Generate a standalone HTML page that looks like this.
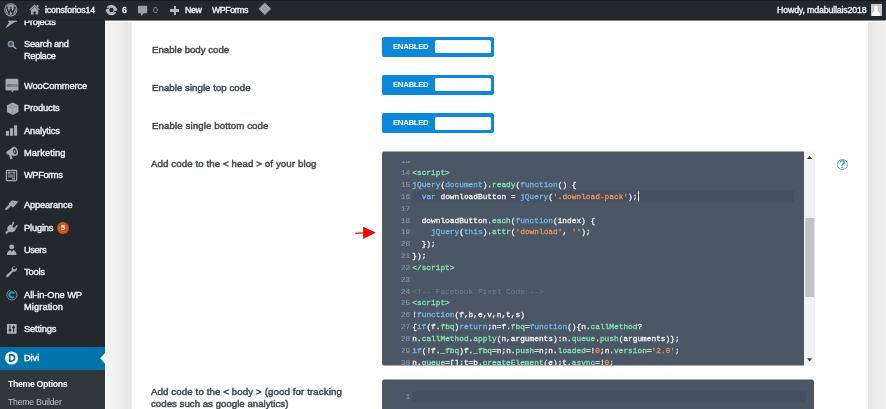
<!DOCTYPE html>
<html><head><meta charset="utf-8">
<style>
*{margin:0;padding:0;box-sizing:border-box}
html,body{width:886px;height:409px;overflow:hidden;background:#fff;font-family:"Liberation Sans",sans-serif;}
#root{position:relative;width:886px;height:409px;overflow:hidden;background:#fff}
.abs{position:absolute}
.x{position:absolute;will-change:transform;line-height:12px;white-space:pre;font-family:"Liberation Sans",sans-serif}
#bar{left:0;top:0;width:886px;height:20px;background:linear-gradient(to bottom,#171b1f 0,#171b1f 0.8px,#23282d 1.4px,#23282d 18.5px,#1f2327 20px);z-index:5;box-shadow:0 0.5px 0.7px rgba(30,34,38,.55)}
#side{left:0;top:0;width:105px;height:409px;background:#23282d}
#sub{left:0;top:369.5px;width:105px;height:40px;background:#32373c}
#divi{left:0;top:347px;width:105px;height:22.5px;background:#0073aa}
#g1{left:105px;top:22px;width:27px;height:387px;background:linear-gradient(to right,#fbfbfb 0,#f3f3f3 1.5px,#f1f1f1 8px,#ececec 18px,#e5e5e5 26.3px,#fff 26.9px)}
#g2{left:867px;top:21.5px;width:19px;height:388px;background:linear-gradient(to right,#fff 0.6px,#e5e5e5 1.2px,#ebebeb 7px,#f0f0f0 19px)}
.tog{position:absolute;left:382px;width:112px;height:20px;background:#0c88d8;border-radius:2px}
.tog i{position:absolute;left:52.8px;top:3.5px;width:56.3px;height:13px;background:#fff;border-radius:1.5px}
#ed1{left:381.8px;top:151px;width:422px;height:214px;transform:translateY(0.5px);background:#4c5766;overflow:hidden;border-radius:2px 0 0 2px}
#scr{left:0;top:8.5px;width:422px;height:205.5px;overflow:hidden}
#act{left:30.2px;top:30.60px;width:382.5px;height:11.6px;background:#455060}
#cur{left:256.2px;top:31.10px;width:0.8px;height:10.5px;background:#fff}
#sb{left:803.8px;top:151px;transform:translateY(0.5px);width:11px;height:214px;background:#f1f1f1}
#th{left:805px;top:218px;width:9px;height:79px;transform:translateX(0.3px);background:#c1c1c1}
#ed2{left:381.8px;top:379px;transform:translateY(0.4px);width:432.5px;height:31px;background:#4c5766;border-radius:2px 2px 0 0}
.ln{position:absolute;will-change:transform;left:0;width:422px;height:12px;font-family:"Liberation Mono",monospace;font-size:7.82px;line-height:12px;white-space:pre;color:#f1f3f5;font-weight:normal;-webkit-text-stroke:0.28px}
.ln .n{position:absolute;left:0;width:28.2px;text-align:right;color:#8893a4;font-weight:normal;-webkit-text-stroke:0.18px}
.ln .c{position:absolute;left:30.3px}
.k{color:#70b8ea}.g{color:#84e0b4}.o{color:#f2935a}.cm{color:#76818f;-webkit-text-stroke:0}.w{color:#f1f3f5}
</style></head><body><div id="root">
<div id="side" class="abs"></div>
<div id="sub" class="abs"></div>
<div id="divi" class="abs"></div>
<svg class="abs" style="left:0;top:20px" width="24" height="10" viewBox="0 0 24 10"><path fill="#a6aaae" d="M8.300 .2h8.500v1.700h-2L6 7.900l-.3-.4L9.300 1.900H8.300z"/></svg>
<svg class="abs" style="left:7.2px;top:39.5px;" width="9.8" height="9.8" viewBox="0 0 20 20"><g fill="none" stroke-width="3"><circle cx="8" cy="8" r="5.2" stroke="#7b95ab" fill="#37526b"/><path d="M12.4 12.2l5.4 5.2" stroke-linecap="round" stroke="#9ea3a8"/></g></svg>
<svg class="abs" style="left:5px;top:78px" width="14" height="15" viewBox="0 0 14 15"><rect x=".5" y=".8" width="12.900" height="11.800" rx="1.300" fill="#a6aaae"/><path d="M6 12.400h2.800l-1.600 2z" fill="#a6aaae"/><text x="7" y="8.700" font-family="Liberation Sans" font-weight="bold" font-size="5.600" text-anchor="middle" fill="#565c62">woo</text></svg>
<svg class="abs" style="left:5.5px;top:101.5px;" width="13.4" height="13.4" viewBox="0 0 20 20"><path fill="#a6aaae" d="M10 .8l8.600 4.200v9.800L10 19.400 1.400 14.800V5z"/><g stroke="#7a8086" stroke-width=".9" fill="none"><path d="M1.800 5.200L10 9.400l8.200-4.200"/><path d="M10 9.400v9.600"/><path d="M5.600 3l8.400 4.200"/></g></svg>
<svg class="abs" style="left:5.4px;top:124.05px;" width="13.1" height="13.1" viewBox="0 0 20 20"><g fill="#a6aaae"><rect x="1.4" y="10.500" width="4.800" height="7.500"/><rect x="7.600" y="6.500" width="4.800" height="11.500"/><rect x="13.800" y="2" width="4.800" height="16"/></g></svg>
<svg class="abs" style="left:5px;top:146px" width="14" height="14" viewBox="0 0 14 14"><g fill="#a6aaae"><path d="M1 6l6.200-4 2.600 8-7.600-1.600z"/><ellipse cx="9.600" cy="5.400" rx="3.200" ry="4.700" transform="rotate(-18 9.600 5.400)"/><path d="M4 8.600l2.700.6.900 3.800-2.300.3z"/></g><ellipse cx="9.800" cy="5.400" rx="1.700" ry="2.900" transform="rotate(-18 9.800 5.400)" fill="#2b3036"/><ellipse cx="9.500" cy="5.500" rx=".8" ry="1.400" transform="rotate(-18 9.500 5.500)" fill="#a6aaae"/></svg>
<svg class="abs" style="left:5.4px;top:168.65px;" width="13.1" height="13.1" viewBox="0 0 20 20"><rect x="2.2" y="2.2" width="15.6" height="15.6" rx="1.2" fill="none" stroke="#a6aaae" stroke-width="1.8"/><g fill="#a6aaae"><rect x="4.3" y="4.2" width="4" height="2.6"/><rect x="11.6" y="4.2" width="4" height="2.6"/><rect x="8.6" y="4.2" width="2.6" height="1.6"/><rect x="4.6" y="8.4" width="10.8" height="1.5"/><rect x="4.6" y="11.3" width="10.8" height="1.5"/><rect x="10.6" y="14" width="4.8" height="1.8"/></g></svg>
<svg class="abs" style="left:4px;top:198px" width="16" height="14" viewBox="4 198 16 14"><path d="M8.600 203.500L12.200 200.200 18.300 201.500 15.800 204.800 13.100 207.500 10.400 205.800z" fill="#a6aaae"/><path d="M6.300 208.900L10.600 204.600" stroke="#a6aaae" stroke-width="2.300" stroke-linecap="round"/><path d="M12.600 202.200l2.800 2.600" stroke="#6a7076" stroke-width=".6"/></svg>
<svg class="abs" style="left:4px;top:220px" width="16" height="15" viewBox="4 220 16 15"><path d="M10.200 224.400L15.800 229.800C14.200 232.600 10.200 233 8.200 231.200C6.200 229.200 7.400 226 10.200 224.400Z" fill="#a6aaae"/><g stroke="#a6aaae" stroke-linecap="round" fill="none"><path d="M8.200 231.200L6.500 232.800" stroke-width="2"/><path d="M12 225.800L13.400 222.600" stroke-width="1.600"/><path d="M14.800 228.400L17 225.900" stroke-width="1.600"/></g></svg>
<svg class="abs" style="left:5.2px;top:243.0px;" width="13.4" height="13.4" viewBox="0 0 20 20"><g fill="#a6aaae"><circle cx="10" cy="5.800" r="3.700"/><path d="M2.800 17.800c0-4.200 2.600-6.600 5-7.200l2.200 2.600 2.200-2.600c2.400.6 5 3 5 7.200z"/></g></svg>
<svg class="abs" style="left:5.4px;top:265.45px;" width="13.1" height="13.1" viewBox="0 0 20 20"><path fill="#a6aaae" d="M16.700 2.300a4.800 4.800 0 0 0-6.500 5.900l-8 7.300a1.900 1.900 0 1 0 2.700 2.700l7.300-8a4.800 4.800 0 0 0 5.900-6.500l-3 3-2.500-.6-.6-2.500z"/></svg>
<svg class="abs" style="left:6.1px;top:289.1px;" width="11.8" height="11.8" viewBox="0 0 20 20"><circle cx="10" cy="10" r="8.600" fill="none" stroke="#8a9096" stroke-width="1.500" stroke-dasharray="46 8" transform="rotate(-62 10 10)"/><circle cx="10" cy="10" r="4.300" fill="none" stroke="#1c97dc" stroke-width="3.200" stroke-dasharray="21 6" transform="rotate(40 10 10)"/></svg>
<svg class="abs" style="left:5.9px;top:322.6px;" width="11.6" height="11.6" viewBox="0 0 20 20"><rect x="1.600" y="1.600" width="16.800" height="16.800" rx="1" fill="#adb1b5"/><g fill="#23282d"><rect x="6" y="4.200" width="1.700" height="11.600"/><rect x="12.300" y="4.200" width="1.700" height="11.600"/><rect x="4.600" y="10.800" width="4.500" height="2.800"/><rect x="10.900" y="6.200" width="4.500" height="2.800"/></g></svg>
<svg class="abs" style="left:4px;top:350px" width="16" height="16" viewBox="0 0 16 16"><circle cx="7.600" cy="8" r="6.550" fill="#fff"/><path d="M5.700 4.900V11.100H7.500A3.100 3.100 0 0 0 7.500 4.900Z" fill="none" stroke="#0073aa" stroke-width="1.700"/></svg>
<svg class="abs" style="left:99px;top:351px" width="7" height="14" viewBox="99 351 7 14"><path d="M105.200 352.700L100.100 358.300 105.200 363.800z" fill="#f3f3f3"/></svg>
<div class="abs" style="left:56.900px;top:221.500px;width:12.400px;height:12.400px;border-radius:50%;background:#d8501f"></div>
<div id="sidetxt" class="abs" style="left:0;top:0;width:105px;height:409px">
<div class="x" style="left:24.0px;top:15.5px;font-size:9.3px;font-weight:normal;color:#eceef0;letter-spacing:-0.249px;-webkit-text-stroke:0.4px #eceef0;">Projects</div>
<div class="x" style="left:23.6px;top:38.3px;font-size:9.3px;font-weight:normal;color:#eceef0;letter-spacing:-0.296px;-webkit-text-stroke:0.4px #eceef0;">Search and</div>
<div class="x" style="left:23.6px;top:50.2px;font-size:9.3px;font-weight:normal;color:#eceef0;letter-spacing:-0.375px;-webkit-text-stroke:0.4px #eceef0;">Replace</div>
<div class="x" style="left:23.6px;top:80.0px;font-size:9.3px;font-weight:normal;color:#eceef0;letter-spacing:-0.120px;-webkit-text-stroke:0.4px #eceef0;">WooCommerce</div>
<div class="x" style="left:23.8px;top:102.3px;font-size:9.3px;font-weight:normal;color:#eceef0;letter-spacing:-0.138px;-webkit-text-stroke:0.4px #eceef0;">Products</div>
<div class="x" style="left:23.8px;top:124.6px;font-size:9.3px;font-weight:normal;color:#eceef0;letter-spacing:-0.178px;-webkit-text-stroke:0.4px #eceef0;">Analytics</div>
<div class="x" style="left:23.8px;top:146.9px;font-size:9.3px;font-weight:normal;color:#eceef0;letter-spacing:0.064px;-webkit-text-stroke:0.4px #eceef0;">Marketing</div>
<div class="x" style="left:23.8px;top:169.2px;font-size:9.3px;font-weight:normal;color:#eceef0;letter-spacing:-0.418px;-webkit-text-stroke:0.4px #eceef0;">WPForms</div>
<div class="x" style="left:23.8px;top:199.0px;font-size:9.3px;font-weight:normal;color:#eceef0;letter-spacing:-0.174px;-webkit-text-stroke:0.4px #eceef0;">Appearance</div>
<div class="x" style="left:23.8px;top:221.6px;font-size:9.3px;font-weight:normal;color:#eceef0;letter-spacing:-0.171px;-webkit-text-stroke:0.4px #eceef0;">Plugins</div>
<div class="x" style="left:23.8px;top:243.6px;font-size:9.3px;font-weight:normal;color:#eceef0;letter-spacing:-0.436px;-webkit-text-stroke:0.4px #eceef0;">Users</div>
<div class="x" style="left:23.8px;top:266.0px;font-size:9.3px;font-weight:normal;color:#eceef0;letter-spacing:-0.181px;-webkit-text-stroke:0.4px #eceef0;">Tools</div>
<div class="x" style="left:24.0px;top:288.8px;font-size:9.3px;font-weight:normal;color:#eceef0;letter-spacing:-0.070px;-webkit-text-stroke:0.4px #eceef0;">All-in-One WP</div>
<div class="x" style="left:24.0px;top:300.5px;font-size:9.3px;font-weight:normal;color:#eceef0;letter-spacing:0.083px;-webkit-text-stroke:0.4px #eceef0;">Migration</div>
<div class="x" style="left:24.0px;top:322.9px;font-size:9.3px;font-weight:normal;color:#eceef0;letter-spacing:-0.174px;-webkit-text-stroke:0.4px #eceef0;">Settings</div>
<div class="x" style="left:24.0px;top:352.2px;font-size:9.3px;font-weight:normal;color:#fff;letter-spacing:-0.100px;-webkit-text-stroke:0.4px #fff;">Divi</div>
<div class="x" style="left:7.9px;top:377.5px;font-size:8.8px;font-weight:bold;color:#fff;letter-spacing:-0.364px;">Theme Options</div>
<div class="x" style="left:7.9px;top:395.8px;font-size:8.6px;font-weight:normal;color:#c0c4c8;letter-spacing:-0.176px;">Theme Builder</div>
<div class="x" style="left:60.9px;top:221.9px;font-size:7.4px;font-weight:bold;color:#fff;letter-spacing:0.075px;">5</div>
</div>
<div id="g1" class="abs"></div>
<div id="g2" class="abs"></div>
<div class="tog" style="top:36.6px"><i></i></div>
<div class="tog" style="top:74.8px"><i></i></div>
<div class="tog" style="top:113px"><i></i></div>
<div class="x" style="left:151.6px;top:43.7px;font-size:9.7px;font-weight:normal;color:#444b53;letter-spacing:-0.029px;-webkit-text-stroke:0.5px #444b53;">Enable body code</div>
<div class="x" style="left:151.6px;top:81.7px;font-size:9.7px;font-weight:normal;color:#444b53;letter-spacing:0.026px;-webkit-text-stroke:0.5px #444b53;">Enable single top code</div>
<div class="x" style="left:151.6px;top:119.7px;font-size:9.7px;font-weight:normal;color:#444b53;letter-spacing:0.096px;-webkit-text-stroke:0.5px #444b53;">Enable single bottom code</div>
<div class="x" style="left:151.4px;top:157.8px;font-size:9.7px;font-weight:normal;color:#444b53;letter-spacing:0.094px;-webkit-text-stroke:0.5px #444b53;">Add code to the &lt; head &gt; of your blog</div>
<div class="x" style="left:151.4px;top:386.0px;font-size:9.7px;font-weight:normal;color:#444b53;letter-spacing:0.108px;-webkit-text-stroke:0.5px #444b53;">Add code to the &lt; body &gt; (good for tracking</div>
<div class="x" style="left:151.4px;top:397.5px;font-size:9.7px;font-weight:normal;color:#444b53;letter-spacing:0.002px;-webkit-text-stroke:0.5px #444b53;">codes such as google analytics)</div>
<div class="x" style="left:392.8px;top:40.6px;font-size:7.8px;font-weight:bold;color:#fff;letter-spacing:-0.341px;">ENABLED</div>
<div class="x" style="left:392.8px;top:78.6px;font-size:7.8px;font-weight:bold;color:#fff;letter-spacing:-0.341px;">ENABLED</div>
<div class="x" style="left:392.8px;top:116.8px;font-size:7.8px;font-weight:bold;color:#fff;letter-spacing:-0.341px;">ENABLED</div>
<div id="ed1" class="abs"><div id="scr" class="abs">
<div id="act" class="abs"></div>
<div class="ln" style="top:-5.25px"><span class="n">13</span><span class="c"></span></div>
<div class="ln" style="top:6.60px"><span class="n">14</span><span class="c"><span class="g">&lt;script&gt;</span></span></div>
<div class="ln" style="top:18.45px"><span class="n">15</span><span class="c"><span class="k">jQuery</span><span class="w">(</span><span class="k">document</span><span class="w">).</span><span class="g">ready</span><span class="w">(</span><span class="k">function</span><span class="w">() {</span></span></div>
<div class="ln" style="top:30.30px"><span class="n">16</span><span class="c"><span class="w">  </span><span class="k">var</span><span class="w"> downloadButton = </span><span class="k">jQuery</span><span class="w">(</span><span class="o">&#x27;.download-pack&#x27;</span><span class="w">);</span></span></div>
<div class="ln" style="top:42.15px"><span class="n">17</span><span class="c"></span></div>
<div class="ln" style="top:54.00px"><span class="n">18</span><span class="c"><span class="w">  downloadButton.</span><span class="g">each</span><span class="w">(</span><span class="k">function</span><span class="w">(index) {</span></span></div>
<div class="ln" style="top:65.85px"><span class="n">19</span><span class="c"><span class="w">    </span><span class="k">jQuery</span><span class="w">(</span><span class="k">this</span><span class="w">).</span><span class="g">attr</span><span class="w">(</span><span class="o">&#x27;download&#x27;</span><span class="w">, </span><span class="o">&#x27;&#x27;</span><span class="w">);</span></span></div>
<div class="ln" style="top:77.70px"><span class="n">20</span><span class="c"><span class="w">  });</span></span></div>
<div class="ln" style="top:89.55px"><span class="n">21</span><span class="c"><span class="w">});</span></span></div>
<div class="ln" style="top:101.40px"><span class="n">22</span><span class="c"><span class="g">&lt;/script&gt;</span></span></div>
<div class="ln" style="top:113.25px"><span class="n">23</span><span class="c"></span></div>
<div class="ln" style="top:125.10px"><span class="n">24</span><span class="c"><span class="cm">&lt;!-- Facebook Pixel Code --&gt;</span></span></div>
<div class="ln" style="top:136.95px"><span class="n">25</span><span class="c"><span class="g">&lt;script&gt;</span></span></div>
<div class="ln" style="top:148.80px"><span class="n">26</span><span class="c"><span class="w">!</span><span class="k">function</span><span class="w">(f,b,e,v,n,t,s)</span></span></div>
<div class="ln" style="top:160.65px"><span class="n">27</span><span class="c"><span class="w">{</span><span class="k">if</span><span class="w">(f.</span><span class="g">fbq</span><span class="w">)</span><span class="k">return</span><span class="w">;n=f.</span><span class="g">fbq</span><span class="w">=</span><span class="k">function</span><span class="w">(){n.</span><span class="g">callMethod</span><span class="w">?</span></span></div>
<div class="ln" style="top:172.50px"><span class="n">28</span><span class="c"><span class="w">n.</span><span class="g">callMethod</span><span class="w">.</span><span class="g">apply</span><span class="w">(n,arguments):n.</span><span class="g">queue</span><span class="w">.</span><span class="g">push</span><span class="w">(arguments)};</span></span></div>
<div class="ln" style="top:184.35px"><span class="n">29</span><span class="c"><span class="k">if</span><span class="w">(!f.</span><span class="g">_fbq</span><span class="w">)f.</span><span class="g">_fbq</span><span class="w">=n;n.</span><span class="g">push</span><span class="w">=n;n.</span><span class="g">loaded</span><span class="w">=!</span><span class="o">0</span><span class="w">;n.</span><span class="g">version</span><span class="w">=</span><span class="o">&#x27;2.0&#x27;</span><span class="w">;</span></span></div>
<div class="ln" style="top:196.20px"><span class="n">30</span><span class="c"><span class="w">n.</span><span class="g">queue</span><span class="w">=[];t=b.</span><span class="g">createElement</span><span class="w">(e);t.</span><span class="g">async</span><span class="w">=!</span><span class="o">0</span><span class="w">;</span></span></div>

<div id="cur" class="abs"></div>
</div></div>
<div id="sb" class="abs"></div>
<div id="th" class="abs"></div>
<div id="ed2" class="abs"><div class="abs" style="left:30.2px;top:11.5px;width:394px;height:11.6px;background:#455060"></div>
<div class="ln" style="top:12px"><span class="n" style="color:#8792a2">1</span></div></div>
<div class="abs" style="left:837px;top:159.100px;width:10.600px;height:10.600px;border-radius:50%;border:1px solid #5da2ea;background:#fff"></div><div class="x" style="left:839.300px;top:158.300px;font-size:10.600px;font-weight:bold;color:#3f8fe4">?</div>
<svg class="abs" style="left:350px;top:222px" width="30" height="22" viewBox="0 0 30 22"><path d="M5.200 11.500L13.300 10.900" stroke="#ff1a1a" stroke-width="1.300" fill="none"/><path d="M13.100 4.700L25.800 10.600 13.100 17.100z" fill="#ff0000"/></svg>
<svg class="abs" style="left:804px;top:152px" width="11" height="213" viewBox="804 152 11 213"><path d="M807.100 159.100L809.600 155.800 812.100 159.100z" fill="#3c3c3c"/><path d="M807.100 358.200L809.600 361.600 812.100 358.200z" fill="#3c3c3c"/></svg>
<div id="bar" class="abs">
<svg class="abs" style="left:4.2px;top:3.2px;" width="13.6" height="13.6" viewBox="0 0 20 20"><circle cx="10" cy="10" r="9.700" fill="#a0a5aa"/><circle cx="10" cy="10" r="8.300" fill="#3a3f45"/><circle cx="10" cy="10" r="7.300" fill="#a0a5aa"/><path d="M3.800 6.400L7.400 15.200 10 8.800 12.600 15.200 16.200 6.400" fill="none" stroke="#2c3136" stroke-width="2.100" stroke-linejoin="miter"/><path d="M2.600 6.200h3.600M8 6.200h3.600M13.800 6.200h3.600" stroke="#2c3136" stroke-width="1.100"/></svg>
<svg class="abs" style="left:28.6px;top:4.4px;" width="11.2" height="11.2" viewBox="0 0 20 20"><g fill="#a0a5aa"><path d="M10 .8L.4 10.400h3v8.400h4.800v-5.600h3.600v5.600h4.800v-8.400h3z"/><path d="M14 1.800h2.800v5l-2.800-2.800z"/></g><path d="M10 4.600L3.800 10.400" stroke="#23282d" stroke-width=".9" fill="none"/><path d="M10 4.600l6.200 5.800" stroke="#23282d" stroke-width=".9" fill="none"/></svg>
<svg class="abs" style="left:103px;top:2px" width="17" height="16" viewBox="-8.400 -7.950 17 16"><circle r="3.750" fill="none" stroke="#b4b9be" stroke-width="3.100"/><path d="M-6.300 .7L-2.800-2.300V2.900z" fill="#b4b9be"/><path d="M6.300-.7L2.800 2.300V-2.900z" fill="#b4b9be"/><path d="M-6.200-1.100L-2.400-1.900" stroke="#23282d" stroke-width=".9"/><path d="M6.200 1.100L2.400 1.900" stroke="#23282d" stroke-width=".9"/></svg>
<svg class="abs" style="left:136px;top:4px" width="14" height="14" viewBox="136 4 14 14"><path fill="#9a9fa4" d="M138.700 5.700h7.700a.8.800 0 0 1 .8.800v6a.8.800 0 0 1-.8.800h-2.600l-2.500 2.700-.7-2.700h-1.900a.8.800 0 0 1-.8-.8v-6a.8.800 0 0 1 .8-.8z"/></svg>
<div class="abs" style="left:170.400px;top:9.300px;width:9.100px;height:2.300px;background:#b4b9be"></div><div class="abs" style="left:173.800px;top:5.900px;width:2.300px;height:9.100px;background:#b4b9be"></div>
<svg class="abs" style="left:257.5px;top:2.4px;" width="13.6" height="13.6" viewBox="0 0 20 20"><path d="M10 .6L19.400 10 10 19.400.6 10z" fill="#8e9398"/><path d="M10 4.400L15.600 10 10 15.600 4.400 10z" fill="none" stroke="#c8ccd0" stroke-width="1.100"/><path d="M10 7.800L12.200 10 10 12.200 7.800 10z" fill="#a8acb0"/></svg>
<div class="abs" style="left:870.500px;top:4.300px;width:11.400px;height:11.400px;background:#c9c9c9;overflow:hidden"><div class="abs" style="left:3.500px;top:1.800px;width:4.400px;height:4.600px;border-radius:50%;background:#fff"></div><div class="abs" style="left:1.400px;top:6.600px;width:8.600px;height:8px;border-radius:45% 45% 0 0;background:#fff"></div></div>
<div class="x" style="left:44.6px;top:4.3px;font-size:8.8px;font-weight:normal;color:#eceef0;letter-spacing:-0.134px;-webkit-text-stroke:0.4px #eceef0;">iconsforios14</div>
<div class="x" style="left:122.0px;top:4.3px;font-size:8.8px;font-weight:normal;color:#eceef0;letter-spacing:-0.906px;-webkit-text-stroke:0.4px #eceef0;">6</div>
<div class="x" style="left:153.4px;top:4.3px;font-size:8.8px;font-weight:normal;color:#8e9398;letter-spacing:-0.406px;">0</div>
<div class="x" style="left:185.3px;top:4.3px;font-size:8.8px;font-weight:normal;color:#eceef0;letter-spacing:-0.336px;-webkit-text-stroke:0.4px #eceef0;">New</div>
<div class="x" style="left:212.0px;top:4.3px;font-size:8.8px;font-weight:normal;color:#eceef0;letter-spacing:-0.456px;-webkit-text-stroke:0.4px #eceef0;">WPForms</div>
<div class="x" style="left:776.8px;top:4.3px;font-size:8.8px;font-weight:normal;color:#eceef0;letter-spacing:-0.155px;-webkit-text-stroke:0.4px #eceef0;">Howdy, mdabullais2018</div>
</div>
</div></body></html>
